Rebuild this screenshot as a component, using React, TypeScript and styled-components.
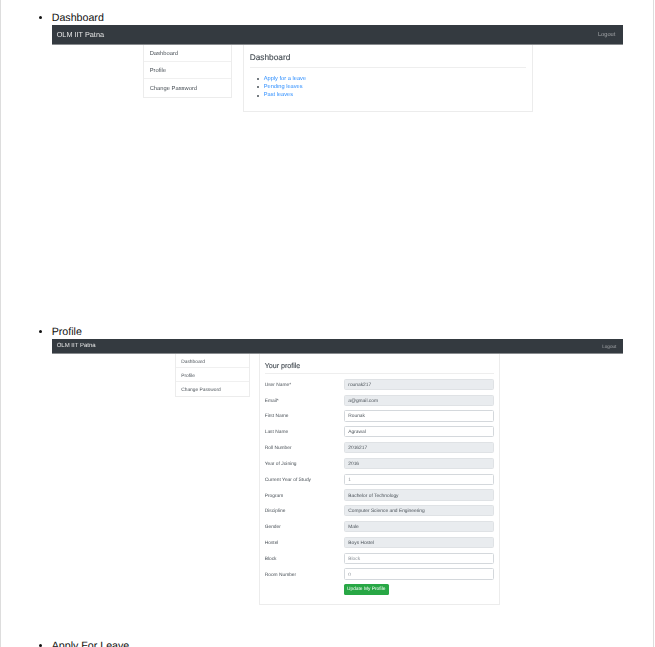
import React from "react";
import styled, { createGlobalStyle } from "styled-components";

const Global = createGlobalStyle`
  html, body { margin: 0; padding: 0; height: 647px; overflow: hidden; background: #fff; }
  body { font-family: "Liberation Sans", Arial, sans-serif; color: #111; }
`;

const Page = styled.div`
  box-sizing: border-box;
  width: 654.4px;
  height: 647px;
  overflow: hidden;
  border-left: 1.3px solid #ddd;
  border-right: 1.3px solid #ddd;
  padding-top: 11px;
`;

const List = styled.ul`
  margin: 0;
  padding: 0 30.1px 0 50.7px;
  list-style: disc;
  font-size: 10.67px;
  text-rendering: geometricPrecision;
`;

const Item = styled.li`
  & > span { display: block; height: 14px; line-height: 15px; }
`;

const Shot = styled.div`
  height: 300px;
  filter: blur(0.55px);
  color: #212529;
`;

const Navbar = styled.div<{ $h: number; $pad: number }>`
  box-sizing: border-box;
  height: ${(p) => p.$h}px;
  padding: 0 ${(p) => p.$pad}px 0 5px;
  background: #343a40;
  border-bottom: 1px solid #888b8e;
  display: flex;
  align-items: center;
  justify-content: space-between;
`;

const Brand = styled.span<{ $fs: number }>`
  font-size: ${(p) => p.$fs}px;
  color: #e6e6e6;
`;

const Logout = styled.span<{ $fs: number }>`
  font-size: ${(p) => p.$fs}px;
  color: rgba(255, 255, 255, 0.5);
`;

const Body = styled.div<{ $left: number; $gap: number }>`
  display: flex;
  align-items: flex-start;
  padding-left: ${(p) => p.$left}px;
  gap: ${(p) => p.$gap}px;
`;

const Side = styled.div<{ $w: number }>`
  box-sizing: border-box;
  width: ${(p) => p.$w}px;
  border: 1px solid #ececec;
  border-top: 0;
`;

const SideRow = styled.div<{ $h: number; $fs: number; $pad: number; $top: number }>`
  box-sizing: border-box;
  height: ${(p) => p.$h}px;
  padding: ${(p) => p.$top}px 0 0 ${(p) => p.$pad}px;
  display: flex;
  align-items: center;
  font-size: ${(p) => p.$fs}px;
  color: #495057;
  border-bottom: 1px solid #f0f0f0;
  &:last-child { border-bottom: 0; }
`;

const Card = styled.div<{ $w: number; $h: number; $pad: number }>`
  box-sizing: border-box;
  width: ${(p) => p.$w}px;
  height: ${(p) => p.$h}px;
  padding: 0 ${(p) => p.$pad}px;
  border: 1px solid #ececec;
  border-top: 0;
`;

const Heading = styled.div<{ $fs: number; $h: number; $top: number }>`
  box-sizing: border-box;
  height: ${(p) => p.$h}px;
  padding-top: ${(p) => p.$top}px;
  display: flex;
  align-items: center;
  font-size: ${(p) => p.$fs}px;
  color: #495057;
  font-weight: 400;
  -webkit-text-stroke: 0.15px #495057;
  border-bottom: 1px solid #eeeeee;
`;

const Links = styled.ul`
  margin: 7.5px 0 0;
  padding: 0 0 0 7px;
  list-style: none;
  font-size: 5.7px;
`;

const LinkItem = styled.li`
  height: 8.2px;
  line-height: 8.2px;
  display: flex;
  align-items: center;
  &::before {
    content: "";
    width: 2px;
    height: 2px;
    margin-right: 5px;
    border-radius: 50%;
    background: #495057;
  }
`;

const Anchor = styled.a`
  color: #2f8fff;
  text-decoration: none;
`;

const Form = styled.div`
  padding-top: 4.3px;
  display: flex;
  flex-direction: column;
  gap: 4.53px;
`;

const Row = styled.div`
  display: grid;
  grid-template-columns: 79px 150.5px;
  align-items: center;
  height: 11.3px;
  font-size: 4.85px;
  color: #495057;
`;

const Label = styled.span`
  padding-top: 2px;
`;

const Field = styled.div<{ $disabled?: boolean; $hint?: boolean }>`
  box-sizing: border-box;
  height: 11.3px;
  padding: 2px 0 0 3.6px;
  display: flex;
  align-items: center;
  font-size: 4.85px;
  border: 0.6px solid ${(p) => (p.$disabled ? "#dfe2e5" : "#d4d8dc")};
  border-radius: 1.5px;
  background: ${(p) => (p.$disabled ? "#e9ecef" : "#fff")};
  color: ${(p) => (p.$hint ? "#8a9097" : "#495057")};
`;

const Update = styled.button`
  grid-column: 2;
  justify-self: start;
  box-sizing: border-box;
  width: 45px;
  height: 11px;
  padding: 0;
  border: 0;
  border-radius: 1.5px;
  background: #28a745;
  color: #fff;
  font: 4.85px "Liberation Sans", Arial, sans-serif;
  text-rendering: geometricPrecision;
`;

const fields: [string, string, boolean, boolean?][] = [
  ["User Name*", "rounak217", true],
  ["Email*", "a@gmail.com", true],
  ["First Name", "Rounak", false],
  ["Last Name", "Agrawal", false],
  ["Roll Number", "2016217", true],
  ["Year of Joining", "2016", true],
  ["Current Year of Study", "1", false, true],
  ["Program", "Bachelor of Technology", true],
  ["Discipline", "Computer Science and Engineering", true],
  ["Gender", "Male", true],
  ["Hostel", "Boys Hostel", true],
  ["Block", "Block", false, true],
  ["Room Number", "0", false, true],
];

const menu = ["Dashboard", "Profile", "Change Password"];

export default function App() {
  return (
    <>
      <Global />
      <Page>
        <List>
          <Item>
            <span>Dashboard</span>
            <Shot>
              <Navbar $h={20} $pad={8}>
                <Brand $fs={7.3}>OLM IIT Patna</Brand>
                <Logout $fs={5.7}>Logout</Logout>
              </Navbar>
              <Body $left={91} $gap={11}>
                <Side $w={89}>
                  {menu.map((m) => (
                    <SideRow key={m} $h={17.2} $fs={5.8} $pad={6} $top={2}>{m}</SideRow>
                  ))}
                </Side>
                <Card $w={290} $h={67} $pad={6}>
                  <Heading $fs={8.3} $h={22.6} $top={1.5}>Dashboard</Heading>
                  <Links>
                    <LinkItem><Anchor>Apply for a leave</Anchor></LinkItem>
                    <LinkItem><Anchor>Pending leaves</Anchor></LinkItem>
                    <LinkItem><Anchor>Past leaves</Anchor></LinkItem>
                  </Links>
                </Card>
              </Body>
            </Shot>
          </Item>
          <Item>
            <span>Profile</span>
            <Shot>
              <Navbar $h={15.4} $pad={7}>
                <Brand $fs={6}>OLM IIT Patna</Brand>
                <Logout $fs={4.6}>Logout</Logout>
              </Navbar>
              <Body $left={123} $gap={9}>
                <Side $w={75}>
                  {menu.map((m) => (
                    <SideRow key={m} $h={13.8} $fs={4.85} $pad={5.5} $top={4}>{m}</SideRow>
                  ))}
                </Side>
                <Card $w={241.5} $h={251} $pad={5}>
                  <Heading $fs={7.1} $h={20} $top={3.5}>Your profile</Heading>
                  <Form>
                    {fields.map(([label, value, disabled, hint]) => (
                      <Row key={label}>
                        <Label>{label}</Label>
                        <Field $disabled={disabled} $hint={hint}>{value}</Field>
                      </Row>
                    ))}
                    <Row>
                      <Update>Update My Profile</Update>
                    </Row>
                  </Form>
                </Card>
              </Body>
            </Shot>
          </Item>
          <Item>
            <span>Apply For Leave</span>
          </Item>
        </List>
      </Page>
    </>
  );
}
